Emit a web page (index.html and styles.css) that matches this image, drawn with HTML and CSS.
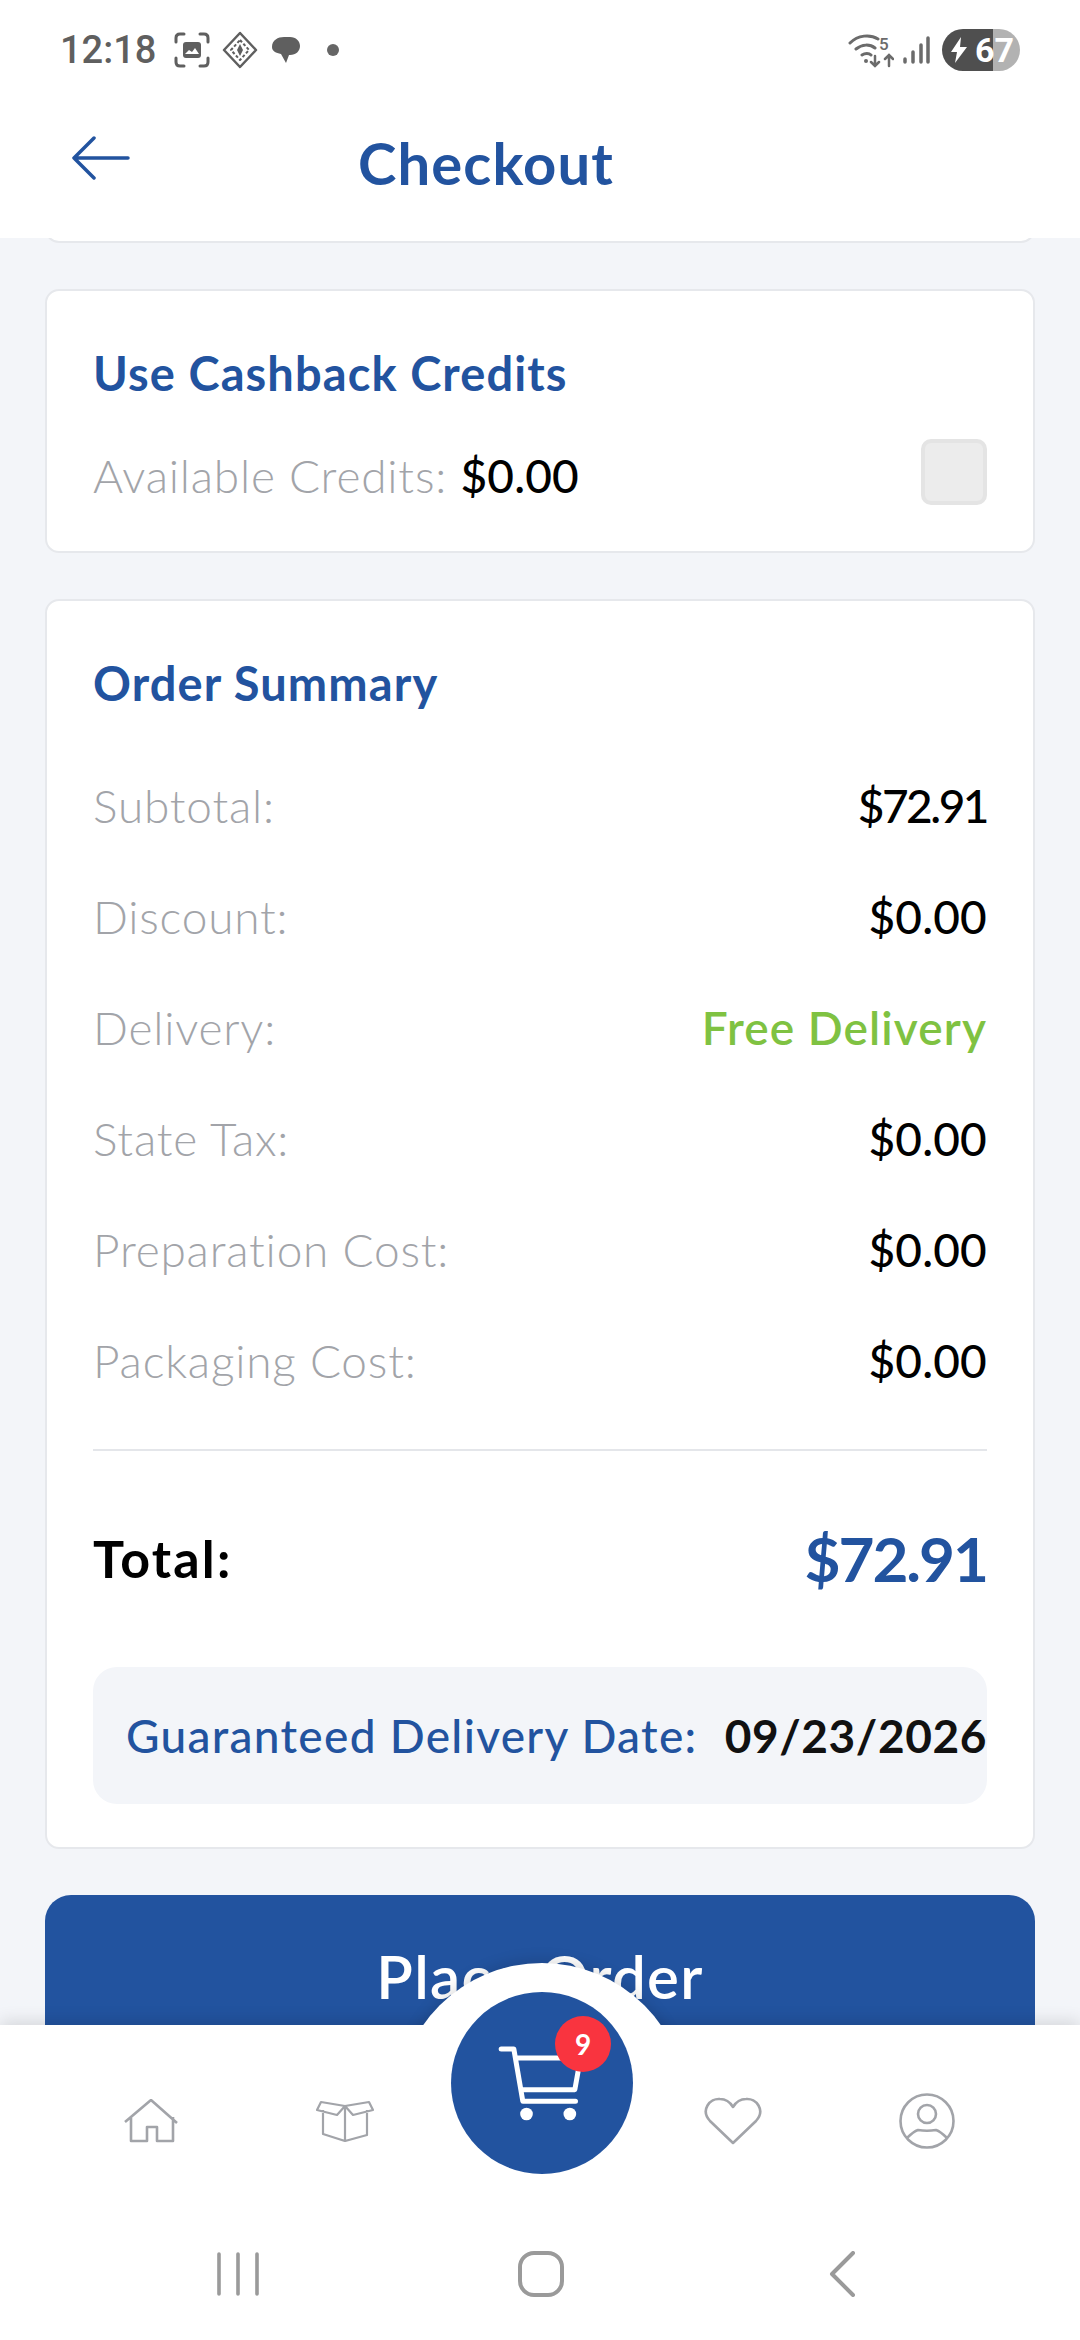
FILE: index.html
```html
<!DOCTYPE html>
<html lang="en">

<head>
    <meta charset="UTF-8">
    <title>Checkout</title>
    <link rel="stylesheet" href="styles.css">
</head>

<body>
    <!-- status bar -->
    <div class="statusBar">
        <div class="statusLeft">
            <span class="time">12:18</span>
            <svg class="statusIcon" width="36" height="36" viewBox="0 0 36 36" fill="none" stroke="#5f5f5f" stroke-width="3" stroke-linecap="round">
                <path d="M2 10V6q0-4 4-4h4M26 2h4q4 0 4 4v4M34 26v4q0 4-4 4h-4M10 34H6q-4 0-4-4v-4"/>
                <rect x="9" y="10" width="18" height="16" rx="3" fill="#5f5f5f" stroke="none"/>
                <path d="M11 22l4-4 3 2 3-4 4 6z" fill="#fff" stroke="none"/>
            </svg>
            <svg class="statusIcon" width="36" height="38" viewBox="0 0 36 38" fill="none" stroke="#5f5f5f" stroke-width="2.5" stroke-linejoin="round">
                <path d="M18 2L34 19 18 36 2 19z"/>
                <path d="M18 9l9 10-9 10-9-10z" stroke-width="2" stroke-dasharray="3 2"/>
                <path d="M18 13l3 6h-6zM18 25l-3-6h6z" fill="#5f5f5f" stroke="none"/>
            </svg>
            <svg class="statusIcon" width="32" height="32" viewBox="0 0 32 32">
                <path d="M2 13C2 6 8 3 14 3h6c6 0 10 4 10 9s-4 9-10 9h-1l-3 8-5-9C6 19 2 17 2 13z" fill="#5f5f5f"/>
            </svg>
            <span class="statusDot"></span>
        </div>
        <div class="statusRight">
            <svg width="46" height="36" viewBox="0 0 46 36" fill="none" stroke="#6b6b6b" stroke-width="3" stroke-linecap="round">
                <path d="M2 11C10 3 22 2 30 7M8 17c6-5 14-5 19-1M14 23c3-2 7-2 9 0"/>
                <circle cx="18" cy="29" r="2" fill="#6b6b6b" stroke="none"/>
                <path d="M27 24v10M23 30l4 4 4-4M41 34V23M37 27l4-4 4 4" stroke-width="2.5"/>
                <text x="31" y="18" class="wifiFive">5</text>
            </svg>
            <svg width="28" height="30" viewBox="0 0 28 30" fill="none" stroke="#6b6b6b" stroke-width="3.5" stroke-linecap="round">
                <path d="M3 27v-3M11 27V17M19 27V10M26 27V3"/>
            </svg>
            <div class="battery">
                <svg width="16" height="26" viewBox="0 0 16 26"><path d="M10 0L0 15h6l-2 11L16 10H9z" fill="#fff"/></svg>
                <span class="batteryText">67</span>
            </div>
        </div>
    </div>

    <!-- header -->
    <div class="header">
        <svg class="backArrow" width="58" height="44" viewBox="0 0 58 44" fill="none" stroke="#22539f" stroke-width="3.5" stroke-linecap="round" stroke-linejoin="round">
            <path d="M22 2L2 22l20 20M2 22h54"/>
        </svg>
        <div class="pageTitle">Checkout</div>
    </div>

    <div class="content">
        <div class="card cardSliver"></div>

        <div class="card creditsCard">
            <div class="cardTitle">Use Cashback Credits</div>
            <div class="creditsRow">
                <div class="label">Available Credits: <span class="value">$0.00</span></div>
                <div class="checkbox"></div>
            </div>
        </div>

        <div class="card summaryCard">
            <div class="cardTitle">Order Summary</div>
            <div class="rows">
                <div class="row"><span class="label">Subtotal:</span><span class="value tight">$72.91</span></div>
                <div class="row"><span class="label">Discount:</span><span class="value">$0.00</span></div>
                <div class="row"><span class="label">Delivery:</span><span class="value free">Free Delivery</span></div>
                <div class="row"><span class="label">State Tax:</span><span class="value">$0.00</span></div>
                <div class="row"><span class="label">Preparation Cost:</span><span class="value">$0.00</span></div>
                <div class="row"><span class="label">Packaging Cost:</span><span class="value">$0.00</span></div>
            </div>
            <div class="totalRow">
                <span class="totalLabel">Total:</span>
                <span class="totalValue">$72.91</span>
            </div>
            <div class="dateBox">
                <span class="dateLabel">Guaranteed Delivery Date:</span>
                <span class="dateValue">09/23/2026</span>
            </div>
        </div>

        <button class="placeOrder">Place Order</button>
    </div>

    <!-- bottom nav -->
    <div class="bottomNav">
        <div class="notch"></div>
        <div class="navItems">
            <svg width="54" height="44" viewBox="0 0 54 44" fill="none" stroke="#a2a4a9" stroke-width="2.6" stroke-linejoin="round">
                <path d="M1 23L27 1l26 23M7 18v24h16V28h10v14h16V18"/>
            </svg>
            <svg width="58" height="42" viewBox="0 0 58 42" fill="none" stroke="#a2a4a9" stroke-width="2.2" stroke-linejoin="round">
                <path d="M7 10v24l22 7 22-6V10M29 6v35M5 2L1 10l20 5 8-9zM29 6l8 9 20-5-4-8-24 4zM5 2l24 4"/>
            </svg>
            <span class="navSpacer"></span>
            <svg width="58" height="48" viewBox="0 0 58 48" fill="none" stroke="#a2a4a9" stroke-width="2.6" stroke-linejoin="round">
                <path d="M29 46L6 24C-4 13 6 1 16 2c6 0 10 3 13 8 3-5 7-8 13-8 10-1 20 11 10 22z"/>
            </svg>
            <svg width="58" height="58" viewBox="0 0 58 58" fill="none" stroke="#a2a4a9" stroke-width="2.6">
                <circle cx="29" cy="29" r="26.5"/>
                <circle cx="29" cy="22" r="9"/>
                <path d="M9 46c4-4 8-7 11-8 6 1 12 1 18 0 3 1 7 4 11 8"/>
            </svg>
        </div>
        <div class="cartButton">
            <svg class="cartIcon" width="87" height="80" viewBox="290 370 260 240" fill="none" stroke="#fff" stroke-width="15" stroke-linecap="round" stroke-linejoin="round">
                <path d="M302 388h38l27 157h158M350 415h190l-17 95H362"/>
                <circle cx="378" cy="583" r="19" fill="#fff" stroke="none"/>
                <circle cx="508" cy="583" r="19" fill="#fff" stroke="none"/>
            </svg>
            <span class="cartBadge">9</span>
        </div>
        <div class="systemNav">
            <svg width="44" height="44" viewBox="0 0 44 44" fill="none" stroke="#9a9a9a" stroke-width="3.6" stroke-linecap="round">
                <path d="M3 2v40M22 2v40M41 2v40"/>
            </svg>
            <svg class="homeKey" width="46" height="46" viewBox="0 0 46 46" fill="none" stroke="#9a9a9a" stroke-width="4">
                <rect x="2" y="2" width="42" height="42" rx="14"/>
            </svg>
            <svg width="28" height="46" viewBox="0 0 28 46" fill="none" stroke="#9a9a9a" stroke-width="4" stroke-linecap="round" stroke-linejoin="round">
                <path d="M25 2L4 23l21 21"/>
            </svg>
        </div>
    </div>
</body>

</html>
```

FILE: styles.css
```css
* {
    box-sizing: border-box;
}

body {
    width: 1080px;
    height: 2340px;
    margin: 0;
    overflow: hidden;
    display: flex;
    flex-direction: column;
    background-color: #f3f5f9;
    font-family: "Lato", "Noto Sans", sans-serif;
    color: #000;
}

/* status bar */
.statusBar {
    height: 100px;
    padding: 0 60px;
    background-color: #fff;
    display: flex;
    justify-content: space-between;
    align-items: center;
    flex-shrink: 0;
}

.statusLeft {
    display: flex;
    align-items: center;
}

.time {
    font-family: "Roboto", sans-serif;
    font-size: 38px;
    font-weight: 500;
    color: #5f5f5f;
    margin-right: 18px;
}

.statusIcon {
    margin-right: 12px;
}

.statusDot {
    width: 12px;
    height: 12px;
    margin-left: 13px;
    border-radius: 50%;
    background-color: #666;
}

.statusRight {
    display: flex;
    align-items: center;
    gap: 8px;
}

.wifiFive {
    font-family: "Roboto", sans-serif;
    font-size: 17px;
    font-weight: 500;
    fill: #6b6b6b;
    stroke: none;
}

.battery {
    width: 78px;
    height: 42px;
    margin-left: 4px;
    padding-left: 9px;
    border-radius: 21px;
    display: flex;
    align-items: center;
    gap: 8px;
    background: linear-gradient(90deg, #4f4f4f 0, #4f4f4f 51px, #b2b2b2 51px);
}

.batteryText {
    font-family: "Roboto", sans-serif;
    font-size: 34px;
    font-weight: 700;
    color: #fff;
}

/* header */
.header {
    height: 138px;
    padding: 0 0 14px 72px;
    background-color: #fff;
    display: flex;
    align-items: center;
    flex-shrink: 0;
}

.backArrow {
    margin-top: -8px;
}

.pageTitle {
    margin-left: 228px;
    font-size: 58px;
    font-weight: 700;
    letter-spacing: 1.1px;
    color: #22539f;
}

/* main */
.content {
    flex: 1;
    min-height: 0;
    overflow: hidden;
    padding: 0 45px;
    display: flex;
    flex-direction: column;
    gap: 46px;
}

.card {
    flex-shrink: 0;
    background-color: #fff;
    border: 2px solid #e6e8ec;
    border-radius: 14px;
}

.cardSliver {
    height: 20px;
    margin-top: -15px;
    border-top: none;
    border-radius: 0 0 14px 14px;
}

.creditsCard {
    height: 264px;
    padding: 50px 46px 0;
}

.cardTitle {
    font-size: 47px;
    font-weight: 700;
    line-height: 64px;
    letter-spacing: 1.1px;
    color: #22539f;
}

.creditsRow {
    margin-top: 40px;
    display: flex;
    justify-content: space-between;
    align-items: center;
}

.label {
    font-size: 46px;
    font-weight: 300;
    letter-spacing: 0.8px;
    color: #a2a4a9;
}

.value {
    font-size: 46px;
    font-weight: 500;
    letter-spacing: 0.2px;
    color: #000;
}

.tight {
    letter-spacing: -2.5px;
}

.free {
    font-weight: 600;
    letter-spacing: 1.1px;
    color: #7fc242;
}

.checkbox {
    width: 66px;
    height: 66px;
    margin-top: -6px;
    border-radius: 10px;
    border: 4px solid #e4e4e4;
    background-color: #ececec;
}

.summaryCard {
    height: 1250px;
    padding: 50px 46px 0;
}

.rows {
    margin-top: 35px;
    padding-bottom: 33px;
    border-bottom: 2px solid #e4e6ea;
}

.row {
    height: 111px;
    display: flex;
    justify-content: space-between;
    align-items: center;
}

.totalRow {
    height: 216px;
    padding-bottom: 2px;
    display: flex;
    justify-content: space-between;
    align-items: center;
}

.totalLabel {
    font-size: 52px;
    font-weight: 700;
    letter-spacing: 2.2px;
}

.totalValue {
    font-size: 62px;
    font-weight: 700;
    letter-spacing: -2px;
    color: #22539f;
}

.dateBox {
    height: 137px;
    padding-left: 33px;
    border-radius: 24px;
    background-color: #f3f5f9;
    display: flex;
    justify-content: space-between;
    align-items: center;
}

.dateLabel {
    font-size: 46px;
    font-weight: 500;
    letter-spacing: 1.3px;
    color: #22539f;
}

.dateValue {
    font-size: 46px;
    font-weight: 700;
    letter-spacing: 0.6px;
    color: #111;
}

.placeOrder {
    flex-shrink: 0;
    height: 170px;
    padding: 0 0 8px;
    border: none;
    border-radius: 26px;
    background-color: #22539f;
    color: #fff;
    font-family: inherit;
    font-size: 60px;
    font-weight: 600;
    letter-spacing: 1.3px;
}

/* bottom nav */
.bottomNav {
    position: relative;
    height: 315px;
    flex-shrink: 0;
    background-color: #fff;
    box-shadow: 0 -4px 16px rgba(0, 0, 0, 0.12);
}

.notch {
    position: absolute;
    left: 397px;
    top: -62px;
    width: 290px;
    height: 290px;
    border-radius: 50%;
    background-color: #fff;
    box-shadow: 0 -4px 14px rgba(0, 0, 0, 0.12);
}

.navItems {
    position: relative;
    height: 226px;
    padding: 67px 0 0 54px;
    display: grid;
    grid-template-columns: repeat(5, 194px);
    justify-items: center;
    align-items: center;
    align-content: start;
    background-color: #fff;
}

.navSpacer {
    width: 100%;
}

.cartButton {
    position: absolute;
    left: 451px;
    top: -33px;
    width: 182px;
    height: 182px;
    padding-right: 4px;
    border-radius: 50%;
    background-color: #22539f;
    display: flex;
    justify-content: center;
    align-items: center;
}

.cartBadge {
    position: absolute;
    left: 104px;
    top: 24px;
    width: 56px;
    height: 56px;
    border-radius: 50%;
    background-color: #f9343f;
    color: #fff;
    font-size: 28px;
    font-weight: 700;
    line-height: 56px;
    text-align: center;
}

.systemNav {
    position: relative;
    height: 46px;
    padding: 0 224px 0 216px;
    background-color: #fff;
    display: flex;
    justify-content: space-between;
    align-items: center;
}

.homeKey {
    margin-right: 6px;
}
```
